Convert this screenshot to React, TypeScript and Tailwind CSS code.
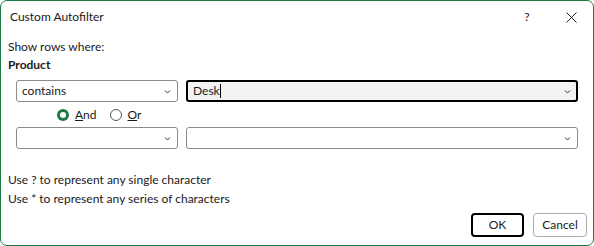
import React from "react";

const Chevron = () => (
  <svg width="7" height="5" viewBox="0 0 7 5" className="shrink-0">
    <path d="M1 1.5 L3.5 4 L6 1.5" fill="none" stroke="#333" strokeWidth="1" />
  </svg>
);

export default function App() {
  return (
    <div
      className="w-[594px] h-[246px] bg-white border border-[#1f7a45] rounded-[7px] flex flex-col text-[12px] text-[#1a1a1a] overflow-hidden"
      style={{ fontFamily: '"Segoe UI", Lato, sans-serif' }}
    >
      <div className="h-[32px] flex items-center pl-[9px] pr-[16px] shrink-0">
        <span className="flex-1">Custom Autofilter</span>
        <span className="w-[20px] text-center mr-[29px]">?</span>
        <svg width="11" height="11" viewBox="0 0 11 11">
          <path d="M0.5 0.5 L10.5 10.5 M10.5 0.5 L0.5 10.5" stroke="#222" strokeWidth="1" />
        </svg>
      </div>
      <div className="pl-[7px] pr-[15px] flex flex-col">
        <div className="h-[19px] leading-[19px] mt-[4px]">Show rows where:</div>
        <div className="h-[18px] leading-[18px] font-bold">Product</div>
        <div className="flex gap-[8px] mt-[6px] pl-[8px]">
          <div className="w-[162px] h-[22px] border border-[#8a8a8a] rounded-[3px] flex items-center pl-[5px] pr-[6px]">
            <span className="flex-1">contains</span>
            <Chevron />
          </div>
          <div className="flex-1 h-[22px] border-2 border-black rounded-[3px] bg-[#f3f3f3] flex items-center pl-[5px] pr-[5px]">
            <span className="flex-1 flex items-center">
              Desk<span className="inline-block w-[1px] h-[14px] bg-black" />
            </span>
            <Chevron />
          </div>
        </div>
        <div className="flex items-center h-[25px] pl-[49px]">
          <span className="w-[12px] h-[12px] rounded-full bg-[#1e7a45] flex items-center justify-center">
            <span className="w-[6px] h-[6px] rounded-full bg-white" />
          </span>
          <span className="ml-[6px]"><span className="underline">A</span>nd</span>
          <span className="ml-[13px] w-[12px] h-[12px] rounded-full border border-[#555]" />
          <span className="ml-[6px]"><span className="underline">O</span>r</span>
        </div>
        <div className="flex gap-[8px] pl-[8px]">
          <div className="w-[162px] h-[22px] border border-[#8a8a8a] rounded-[3px] flex items-center pl-[5px] pr-[6px]">
            <span className="flex-1" />
            <Chevron />
          </div>
          <div className="flex-1 h-[22px] border border-[#8a8a8a] rounded-[3px] flex items-center pl-[5px] pr-[6px]">
            <span className="flex-1" />
            <Chevron />
          </div>
        </div>
        <div className="mt-[21px] h-[19px] leading-[19px]">Use ? to represent any single character</div>
        <div className="h-[19px] leading-[19px]">Use * to represent any series of characters</div>
      </div>
      <div className="flex justify-end gap-[9px] pr-[6px] mt-[5px]">
        <div className="w-[53px] h-[24px] border-2 border-black rounded-[4px] flex items-center justify-center">OK</div>
        <div className="w-[54px] h-[24px] border border-[#aaa] rounded-[4px] flex items-center justify-center">Cancel</div>
      </div>
    </div>
  );
}
